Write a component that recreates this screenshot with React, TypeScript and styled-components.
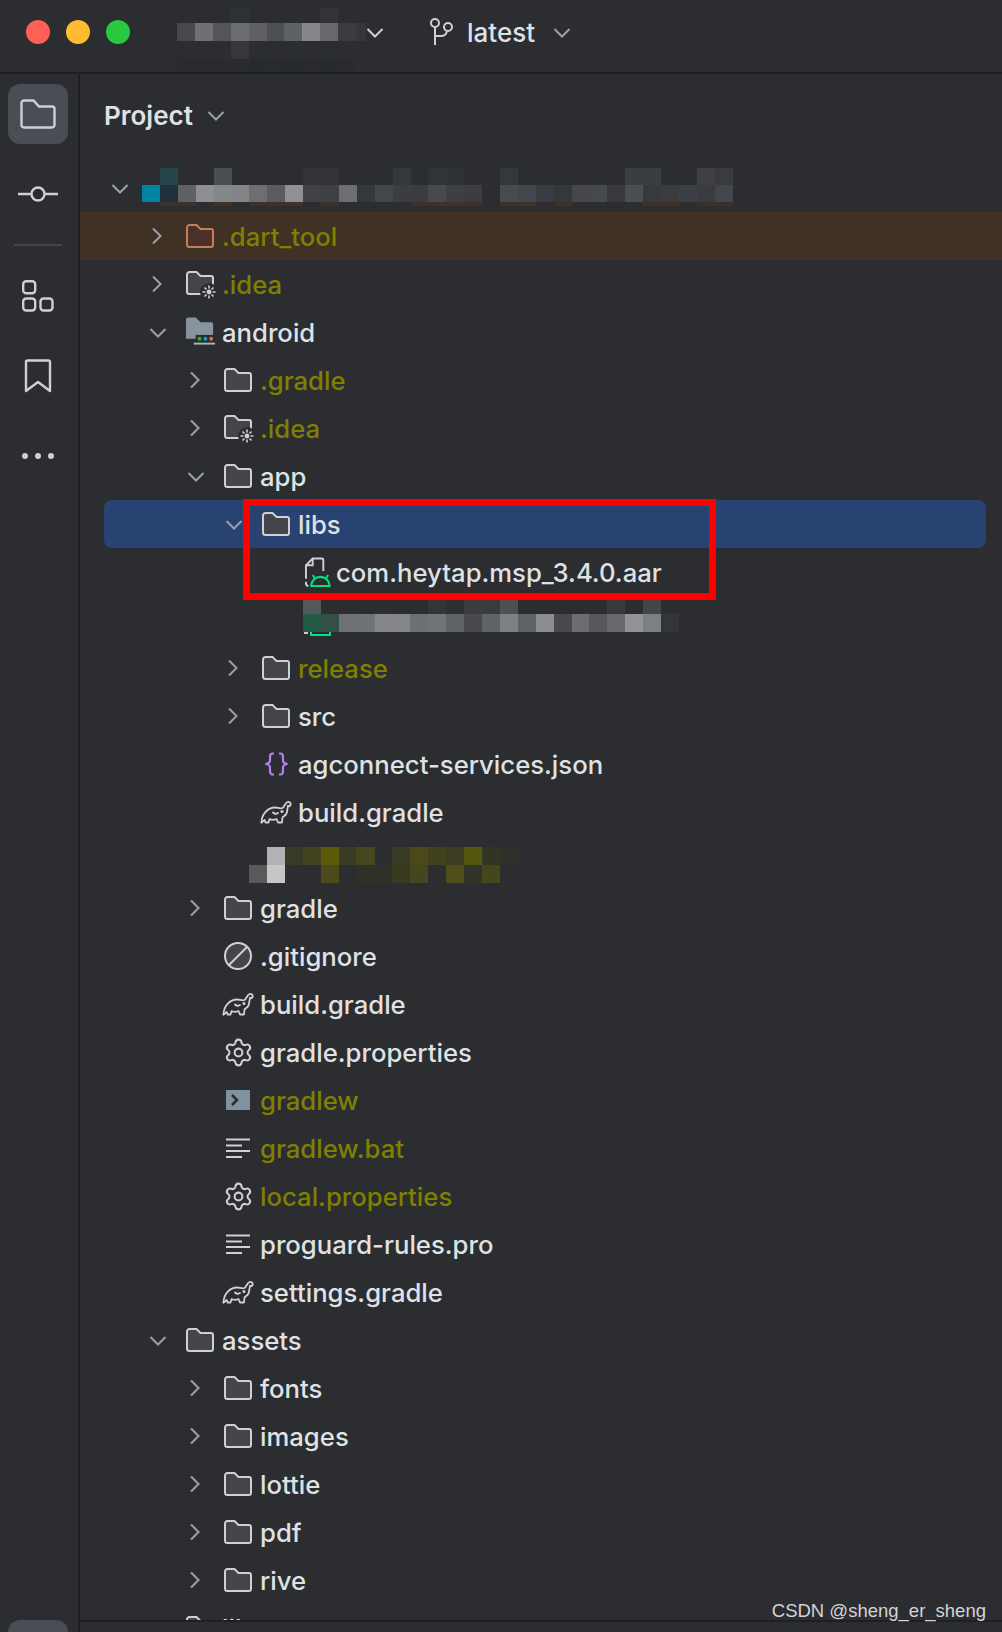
import styled, { createGlobalStyle } from 'styled-components';
import { Settings } from 'lucide-react';

const GlobalStyle = createGlobalStyle`
  html, body { margin: 0; padding: 0; background: #2b2d30; }
  * { box-sizing: border-box; }
`;

const ICON = '#ced0d6';
const ICON_FILL = '#43454a';

const Window = styled.div`
  position: relative;
  width: 1002px;
  height: 1632px;
  display: flex;
  flex-direction: column;
  overflow: hidden;
  background: #2b2d30;
  color: #dfe1e5;
  font-family: Inter, 'Noto Sans', sans-serif;
  font-size: 25.7px;
  font-weight: 450;
`;

const TitleBar = styled.header`
  flex: none;
  height: 74px;
  display: flex;
  align-items: center;
  padding: 0 0 8px 26px;
  border-bottom: 2px solid #1e1f22;
`;

const Light = styled.span<{ $color: string }>`
  width: 24px;
  height: 24px;
  border-radius: 50%;
  margin-right: 16px;
  background: ${(p) => p.$color};
`;

const TitleBlur = styled.div`
  align-self: flex-start;
  margin: 8px 0 0 31px;
`;

const TitleChevron = styled.div`
  display: flex;
`;

const BranchButton = styled.div`
  display: flex;
  align-items: center;
  margin-left: 46px;
`;

const BranchName = styled.span`
  margin: 0 18px 0 13px;
  font-size: 26px;
  font-weight: 500;
`;

const Body = styled.div`
  flex: 1;
  min-height: 0;
  display: flex;
`;

const Sidebar = styled.nav`
  flex: none;
  width: 80px;
  border-right: 2px solid #1e1f22;
  padding: 10px 0 0 8px;
  display: flex;
  flex-direction: column;
`;

const ToolButton = styled.div<{ $active?: boolean }>`
  flex: none;
  width: 60px;
  height: 60px;
  margin-bottom: 20px;
  border-radius: 12px;
  display: flex;
  align-items: center;
  justify-content: center;
  background: ${(p) => (p.$active ? '#4a4d53' : 'transparent')};
`;

const SideDivider = styled.div`
  flex: none;
  width: 48px;
  height: 2px;
  margin: 0 0 20px 6px;
  background: #43454a;
`;

const SideSpacer = styled.div`
  flex: 1;
`;

const BottomTab = styled.div`
  flex: none;
  width: 60px;
  height: 12px;
  border-radius: 12px 12px 0 0;
  background: #4a4d53;
`;

const Panel = styled.main`
  flex: 1;
  min-width: 0;
  display: flex;
  flex-direction: column;
`;

const PanelHeader = styled.div`
  flex: none;
  height: 90px;
  padding: 0 0 8px 24px;
  display: flex;
  align-items: center;
  gap: 14px;
  font-size: 26px;
  font-weight: 600;
`;

const Tree = styled.div`
  position: relative;
  flex: 1;
  min-height: 0;
  overflow: hidden;
`;

const StatusBar = styled.div`
  flex: none;
  height: 12px;
  border-top: 2px solid #1e1f22;
`;

const Row = styled.div<{ $depth: number; $selected?: boolean; $ignored?: boolean }>`
  height: 48px;
  display: flex;
  align-items: center;
  white-space: nowrap;
  padding-left: ${(p) => p.$depth * 38 + 25 - (p.$selected ? 24 : 0)}px;
  margin: ${(p) => (p.$selected ? '0 16px 0 24px' : '0')};
  border-radius: ${(p) => (p.$selected ? '8px' : '0')};
  background: ${(p) => (p.$selected ? '#284371' : p.$ignored ? '#3f3124' : 'transparent')};
`;

const BlurRow = styled.div<{ $left: number; $top: number }>`
  position: relative;
  height: 48px;
  padding: ${(p) => p.$top}px 0 0 ${(p) => p.$left}px;
`;

const ChevronSlot = styled.span`
  flex: none;
  width: 30px;
  display: flex;
  justify-content: center;
`;

const IconSlot = styled.span`
  flex: none;
  width: 34px;
  height: 34px;
  margin: 0 5px 0 10px;
  display: flex;
  align-items: center;
  justify-content: center;
`;

const Label = styled.span<{ $vcs?: boolean }>`
  color: ${(p) => (p.$vcs ? '#808000' : '#dfe1e5')};
`;

const RootBlur = styled.div`
  align-self: flex-start;
  margin: 4px 0 0 7px;
`;

const RedBox = styled.div`
  position: absolute;
  left: 163px;
  top: 335px;
  width: 473px;
  height: 101px;
  border: 7px solid #ff0000;
`;

const Watermark = styled.div`
  position: absolute;
  right: 16px;
  top: 1599px;
  font-family: 'Liberation Sans', Arial, sans-serif;
  font-size: 18.5px;
  font-weight: 400;
  line-height: 24px;
  color: #d4d4d4;
`;

const MosaicSvg = styled.svg`
  display: block;
`;

const CELL = 17.9;

type MosaicRow = { h: number; cells: string };

function Mosaic({ rows, width }: { rows: MosaicRow[]; width: number }) {
  let y = 0;
  const rects: React.ReactNode[] = [];
  rows.forEach((r, ri) => {
    r.cells.split(' ').forEach((c, ci) => {
      if (c !== '-') {
        rects.push(<rect key={`${ri}-${ci}`} x={ci * CELL} y={y} width={CELL + 0.2} height={r.h} fill={c} />);
      }
    });
    y += r.h;
  });
  return (
    <MosaicSvg width={width} height={y} viewBox={`0 0 ${width} ${y}`} shapeRendering="crispEdges">
      {rects}
    </MosaicSvg>
  );
}

const titleBlur: MosaicRow[] = [
  { h: 15, cells: '- - - #2b3336 - - - - #323437' },
  { h: 18, cells: '#47494c #6e7073 #535558 #6a6c70 #5e6063 #4e5053 #5d6265 #85878b #67696d #3a3c40 #343639' },
  { h: 18, cells: '- - - #35373a' },
  { h: 12, cells: '#292b2e #292b2e #292b2e #292b2e #272a2c #282a2d #272a2c #282a2d #272a2c #292b2e' },
];

const rootBlur: MosaicRow[] = [
  { h: 17, cells: '- #27454b - - #4b4f53 - - - - #323437 #313336 - - - #33393c - #2f3437 #2f3235 - - #33393b - - - - - - #3a3e42 #3a3d41 - - #3e4043 #393b3f' },
  { h: 17, cells: '#0084a3 #20313d #5f6166 #8d8f93 #83888b #828487 #6c6e72 #5a5c60 #8e9094 #404246 #3e4044 #6c6e71 #33383b #43464c #3a3d41 #3a3c40 #47494e #3d3f43 #3b3d41 - #474a50 #43464d #383c40 #33393a #45474c #46494e #37393c #4b4e53 #37393c #393b3f #3c3f44 #393b40 #43464c' },
  { h: 4, cells: '- #3f3124 #3f3124 - #3f3124 - #3f3124 #3f3124 #3f3124 - #3f3124 - - - - #3f3124 #3f3124 #3f3124 #3f3124 - #3f3124 #3f3124 - #3f3124 - - - - #3f3124 #3f3124 - #3a3026 #3a3026' },
];

const aarBlur: MosaicRow[] = [
  { h: 14, cells: '#55585b - - - - - - #333538 #2e3033 #3a3c3f #383c3f #4e5054 - - - - - #37393d - #434549' },
  { h: 18, cells: '#235a45 #344f45 #6f7173 #6f7375 #858789 #858688 #6d7173 #737477 #5e6366 #47494c #5f6467 #7e8083 #5f6366 #8b8c8f #48494d #6b6d70 #56585c #68696d #929396 #7b8083 #333538' },
];

const gitBlur: MosaicRow[] = [
  { h: 18, cells: '- #b1b2b4 #383a26 #43431f #5a5a0a #3a3b22 #46471c - #3a3b25 #49491c #41421d #3b3c22 #55560f #323425 #2e3029' },
  { h: 18, cells: '#58595b #c6c7c5 #2c2e30 - #4a4a1b - #2f3028 #303128 #38391f #45461f - #4d4e18 #333429 #45461c' },
];

function AarRemnant() {
  return (
    <svg width="30" height="5" viewBox="0 0 30 5" fill="none" style={{ display: 'block' }}>
      <rect x="1" y="0" width="4" height="2" fill="#c9cbd0" />
      <path d="M8 0V3H27V0" stroke="#00e27b" strokeWidth="2" />
    </svg>
  );
}

function ChevronRight() {
  return (
    <svg width="11" height="18" viewBox="0 0 11 18" fill="none" style={{ marginLeft: -4 }}>
      <path d="M2 1.500 9.500 9 2 16.500" stroke="#9da0a8" strokeWidth="2" />
    </svg>
  );
}

function ChevronDown({ color = '#9da0a8' }: { color?: string }) {
  return (
    <svg width="18" height="11" viewBox="0 0 18 11" fill="none">
      <path d="M1.500 2 9 9.500 16.500 2" stroke={color} strokeWidth="2" />
    </svg>
  );
}

const FOLDER_D = 'M3.500 1H10.500L14.500 5H25a2 2 0 0 1 2 2V21a2 2 0 0 1-2 2H3.500a2.500 2.500 0 0 1-2.500-2.500V3.500A2.500 2.500 0 0 1 3.500 1Z';

function FolderIcon({ stroke = ICON, fill = ICON_FILL }: { stroke?: string; fill?: string }) {
  return (
    <svg width="28" height="24" viewBox="0 0 28 24">
      <path d={FOLDER_D} fill={fill} stroke={stroke} strokeWidth="2" />
    </svg>
  );
}

function ConfigFolderIcon() {
  return (
    <svg width="30" height="30" viewBox="0 0 30 30" style={{ marginTop: 4, marginLeft: 2 }}>
      <path d={FOLDER_D} fill={ICON_FILL} stroke={ICON} strokeWidth="2" />
      <circle cx="23" cy="21" r="9" fill="#2b2d30" />
      <circle cx="23" cy="21" r="2.400" fill={ICON} />
      <path d="M23 14.500v3M23 24.500v3M16.500 21h3M26.500 21h3M18.500 16.500l2 2M25.500 23.500l2 2M27.500 16.500l-2 2M20.500 23.500l-2 2" stroke={ICON} strokeWidth="1.600" />
    </svg>
  );
}

function ModuleFolderIcon() {
  return (
    <svg width="32" height="30" viewBox="0 0 32 30" style={{ marginLeft: 3 }}>
      <path d="M0 2a2 2 0 0 1 2-2H10L15 5H26a2 2 0 0 1 2 2V22H0Z" fill="#87939f" />
      <rect x="10" y="18" width="20" height="8" fill="#2b2d30" />
      <circle cx="14" cy="22" r="2" fill="#2bb52b" />
      <circle cx="20" cy="22" r="2" fill="#00a8e0" />
      <circle cx="26" cy="22" r="2" fill="#f26522" />
      <rect x="8" y="26" width="22" height="2" fill="#a9b4bc" />
    </svg>
  );
}

function AarIcon() {
  return (
    <svg width="27" height="31" viewBox="0 0 27 31" fill="none" style={{ marginLeft: 8 }}>
      <path d="M1 22V8L8 1H17.500a1.500 1.500 0 0 1 1.500 1.500V14" stroke={ICON} strokeWidth="2" />
      <path d="M8 1V8H1" stroke={ICON} strokeWidth="2" />
      <path d="M1 25v2a2.500 2.500 0 0 0 2.500 2.500" stroke={ICON} strokeWidth="2" />
      <path d="M6.500 29.500a9.500 9.500 0 0 1 19 0Z" stroke="#00e27b" strokeWidth="2.200" fill="#2b2d30" />
      <path d="M10 21.500 8 18M22 21.500 24 18" stroke="#00e27b" strokeWidth="2" />
    </svg>
  );
}

function GradleIcon() {
  return (
    <svg width="32" height="25" viewBox="0 0 32 25" fill="none" stroke={ICON} strokeWidth="1.800" strokeLinejoin="round" strokeLinecap="round">
      <path d="M1.500 22.500C1.500 14 8 7.500 15 7.500c3 0 5 1.500 7.500.500 2-1 2.500-5 5-6 2-.700 3.800 1 3 3.200-.400 1-1.800 1.500-2.500.500" />
      <path d="M28 6.500c-1 2.500-.500 5-1.500 7-1 2-3 3-4 4l-.500 5h-4l-1.500-3.500c-2 1-5 1-7 .200l-1 3.300H5.500l-.800-2.500-3.200 2.500" />
      <path d="M13 12.500c1.500 1.500 3.500 1.500 5 .500" />
      <circle cx="22" cy="11.500" r="0.700" fill={ICON} />
    </svg>
  );
}

function BanIcon() {
  return (
    <svg width="28" height="28" viewBox="0 0 28 28">
      <circle cx="14" cy="14" r="13" fill={ICON_FILL} stroke={ICON} strokeWidth="2" />
      <path d="M5 23 23 5" stroke={ICON} strokeWidth="2" />
    </svg>
  );
}

function ShellIcon() {
  return (
    <svg width="24" height="20" viewBox="0 0 24 20">
      <rect width="24" height="20" fill="#7f929f" />
      <path d="M6 5l5 5-5 5" fill="none" stroke="#2b2d30" strokeWidth="2.600" />
    </svg>
  );
}

function TextIcon() {
  return (
    <svg width="24" height="20" viewBox="0 0 24 20">
      <path d="M0 1.500H24M0 7.500H16M0 13H24M0 19H16" stroke={ICON} strokeWidth="2" />
    </svg>
  );
}

function GearIcon() {
  return <Settings size={31} color={ICON} strokeWidth={1.600} />;
}

function JsonIcon() {
  return (
    <svg width="25" height="24" viewBox="0 0 25 24" fill="none" stroke="#b57ff0" strokeWidth="2.200">
      <path d="M10 1.500H8.500C6 1.500 6 3.500 6 5.500V8.500C6 10.500 5 11.500 1.500 12 5 12.500 6 13.500 6 15.500V18.500C6 20.500 6 22.500 8.500 22.500H10" />
      <path d="M15 1.500H16.500C19 1.500 19 3.500 19 5.500V8.500C19 10.500 20 11.500 23.500 12 20 12.500 19 13.500 19 15.500V18.500C19 20.500 19 22.500 16.500 22.500H15" />
    </svg>
  );
}

function BranchIcon() {
  return (
    <svg width="24" height="28" viewBox="0 0 24 28" fill="none" stroke={ICON} strokeWidth="2">
      <circle cx="5" cy="5" r="4" />
      <circle cx="18" cy="9" r="4" />
      <path d="M5 9V27M5 18H11a6 6 0 0 0 6-5" />
    </svg>
  );
}

function SideFolder() {
  return (
    <svg width="36" height="30" viewBox="0 0 36 30" fill="none">
      <path d="M4 1.500H13.500L19 7.500H32a2.500 2.500 0 0 1 2.500 2.500V26a2.500 2.500 0 0 1-2.500 2.500H4A2.500 2.500 0 0 1 1.500 26V4A2.500 2.500 0 0 1 4 1.500Z" stroke={ICON} strokeWidth="2.400" />
    </svg>
  );
}

function SideCommit() {
  return (
    <svg width="40" height="16" viewBox="0 0 40 16" fill="none" stroke={ICON} strokeWidth="2.400">
      <circle cx="20" cy="8" r="6.500" />
      <path d="M0 8H13M27 8H40" />
    </svg>
  );
}

function SideStructure() {
  return (
    <svg width="32" height="32" viewBox="0 0 32 32" fill="none" stroke={ICON} strokeWidth="2.400">
      <rect x="1.200" y="1.200" width="12" height="12" rx="3" />
      <rect x="1.200" y="18.500" width="12" height="12" rx="3" />
      <rect x="18.500" y="18.500" width="12" height="12" rx="3" />
    </svg>
  );
}

function SideBookmark() {
  return (
    <svg width="28" height="34" viewBox="0 0 28 34" fill="none">
      <path d="M2 3a1.500 1.500 0 0 1 1.500-1.500h21A1.500 1.500 0 0 1 26 3V32L14 23 2 32Z" stroke={ICON} strokeWidth="2.400" strokeLinejoin="round" />
    </svg>
  );
}

function SideMore() {
  return (
    <svg width="32" height="6" viewBox="0 0 32 6" fill={ICON}>
      <circle cx="3" cy="3" r="3" />
      <circle cx="16" cy="3" r="3" />
      <circle cx="29" cy="3" r="3" />
    </svg>
  );
}

type Entry = {
  depth: number;
  name: string;
  icon: React.ReactNode;
  open?: boolean;
  closed?: boolean;
  vcs?: boolean;
  selected?: boolean;
  ignored?: boolean;
};

const folder = <FolderIcon />;
const config = <ConfigFolderIcon />;
const gradle = <GradleIcon />;

const beforeAar: Entry[] = [
  { depth: 1, name: '.dart_tool', icon: <FolderIcon stroke="#c77d55" fill="#4a3028" />, closed: true, vcs: true, ignored: true },
  { depth: 1, name: '.idea', icon: config, closed: true, vcs: true },
  { depth: 1, name: 'android', icon: <ModuleFolderIcon />, open: true },
  { depth: 2, name: '.gradle', icon: folder, closed: true, vcs: true },
  { depth: 2, name: '.idea', icon: config, closed: true, vcs: true },
  { depth: 2, name: 'app', icon: folder, open: true },
  { depth: 3, name: 'libs', icon: folder, open: true, selected: true },
  { depth: 4, name: 'com.heytap.msp_3.4.0.aar', icon: <AarIcon /> },
];

const afterAar: Entry[] = [
  { depth: 3, name: 'release', icon: folder, closed: true, vcs: true },
  { depth: 3, name: 'src', icon: folder, closed: true },
  { depth: 3, name: 'agconnect-services.json', icon: <JsonIcon /> },
  { depth: 3, name: 'build.gradle', icon: gradle },
];

const afterGit: Entry[] = [
  { depth: 2, name: 'gradle', icon: folder, closed: true },
  { depth: 2, name: '.gitignore', icon: <BanIcon /> },
  { depth: 2, name: 'build.gradle', icon: gradle },
  { depth: 2, name: 'gradle.properties', icon: <GearIcon /> },
  { depth: 2, name: 'gradlew', icon: <ShellIcon />, vcs: true },
  { depth: 2, name: 'gradlew.bat', icon: <TextIcon />, vcs: true },
  { depth: 2, name: 'local.properties', icon: <GearIcon />, vcs: true },
  { depth: 2, name: 'proguard-rules.pro', icon: <TextIcon /> },
  { depth: 2, name: 'settings.gradle', icon: gradle },
  { depth: 1, name: 'assets', icon: folder, open: true },
  { depth: 2, name: 'fonts', icon: folder, closed: true },
  { depth: 2, name: 'images', icon: folder, closed: true },
  { depth: 2, name: 'lottie', icon: folder, closed: true },
  { depth: 2, name: 'pdf', icon: folder, closed: true },
  { depth: 2, name: 'rive', icon: folder, closed: true },
  { depth: 1, name: 'lib', icon: folder, open: true },
];

function TreeRow({ entry }: { entry: Entry }) {
  return (
    <Row $depth={entry.depth} $selected={entry.selected} $ignored={entry.ignored}>
      <ChevronSlot>
        {entry.open && <ChevronDown />}
        {entry.closed && <ChevronRight />}
      </ChevronSlot>
      <IconSlot>{entry.icon}</IconSlot>
      <Label $vcs={entry.vcs}>{entry.name}</Label>
    </Row>
  );
}

export default function App() {
  return (
    <Window>
      <GlobalStyle />
      <TitleBar>
        <Light $color="#ff5f57" />
        <Light $color="#febc2e" />
        <Light $color="#28c840" />
        <TitleBlur>
          <Mosaic rows={titleBlur} width={189} />
        </TitleBlur>
        <TitleChevron>
          <ChevronDown color={ICON} />
        </TitleChevron>
        <BranchButton>
          <BranchIcon />
          <BranchName>latest</BranchName>
          <ChevronDown />
        </BranchButton>
      </TitleBar>
      <Body>
        <Sidebar>
          <ToolButton $active>
            <SideFolder />
          </ToolButton>
          <ToolButton>
            <SideCommit />
          </ToolButton>
          <SideDivider />
          <ToolButton>
            <SideStructure />
          </ToolButton>
          <ToolButton>
            <SideBookmark />
          </ToolButton>
          <ToolButton>
            <SideMore />
          </ToolButton>
          <SideSpacer />
          <BottomTab />
        </Sidebar>
        <Panel>
          <PanelHeader>
            Project
            <ChevronDown />
          </PanelHeader>
          <Tree>
            <Row $depth={0}>
              <ChevronSlot>
                <ChevronDown />
              </ChevronSlot>
              <RootBlur>
                <Mosaic rows={rootBlur} width={592} />
              </RootBlur>
            </Row>
            {beforeAar.map((e, i) => (
              <TreeRow key={i} entry={e} />
            ))}
            <BlurRow $left={223} $top={4}>
              <Mosaic rows={aarBlur} width={376} />
              <AarRemnant />
            </BlurRow>
            {afterAar.map((e, i) => (
              <TreeRow key={i} entry={e} />
            ))}
            <BlurRow $left={169} $top={11}>
              <Mosaic rows={gitBlur} width={270} />
            </BlurRow>
            {afterGit.map((e, i) => (
              <TreeRow key={i} entry={e} />
            ))}
            <RedBox />
          </Tree>
          <StatusBar />
        </Panel>
      </Body>
      <Watermark>CSDN @sheng_er_sheng</Watermark>
    </Window>
  );
}
